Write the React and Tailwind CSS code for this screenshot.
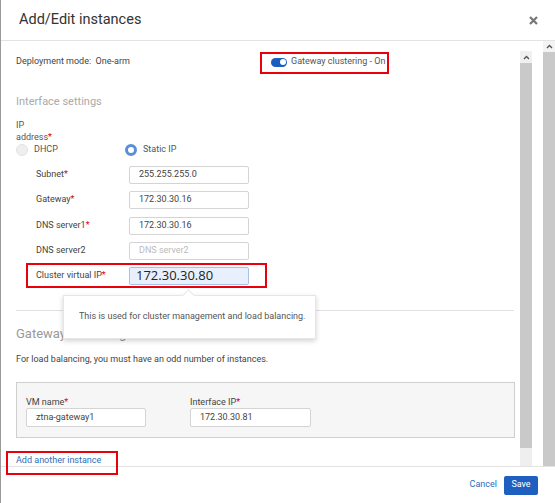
import React from 'react';

const Req = () => <span className="text-[#d0021b]">*</span>;

const Field = ({ label, required, value, placeholder, highlight }) => (
  <div className="flex items-center h-[18px]">
    <div className="w-[93px] text-[9px] text-[#444]">
      {label}
      {required && <Req />}
    </div>
    {highlight ? (
      <div className="w-[120px] h-[18px] flex items-center pl-[6px] bg-[#e8f0fe] border border-[#a9c1e3] rounded-[2px] text-[13px] text-[#222] font-['Open_Sans',sans-serif]">
        {value}
      </div>
    ) : (
      <div
        className={
          'w-[120px] h-[18px] flex items-center pl-[9px] bg-white border border-[#d4d4d4] rounded-[2px] text-[9px] ' +
          (value ? 'text-[#444]' : 'text-[#bbb]')
        }
      >
        {value || placeholder}
      </div>
    )}
  </div>
);

const Caret = () => (
  <svg width="7" height="5" viewBox="0 0 7 5">
    <path d="M1 4 L3.5 1.5 L6 4" fill="none" stroke="#555" strokeWidth="1.4" />
  </svg>
);

export default function App() {
  return (
    <div className="relative w-[555px] h-[503px] bg-white border-l border-[#9a9a9a] flex flex-col overflow-hidden font-['Roboto',sans-serif]">
      {/* header */}
      <div className="h-[41px] shrink-0 border-b border-[#e3e3e3] flex items-center justify-between pl-[18px] pr-[17px]">
        <div className="text-[14.5px] text-[#333]">Add/Edit instances</div>
        <svg width="9" height="9" viewBox="0 0 9 9">
          <path d="M1 1 L8 8 M8 1 L1 8" stroke="#777" strokeWidth="2.2" />
        </svg>
      </div>

      {/* body */}
      <div className="h-[425px] shrink-0 flex">
        <div className="w-[514px] shrink-0 pl-[15px] overflow-hidden">
          <div className="flex items-center h-[22px] mt-[10px] text-[9px] text-[#444]">
            <div className="w-[255px]">Deployment mode:&nbsp; One-arm</div>
            <div className="w-[16px] h-[9px] rounded-full bg-[#1a5fc0] flex items-center justify-end pr-[1.5px]">
              <div className="w-[6px] h-[6px] rounded-full bg-white" />
            </div>
            <div className="ml-[4px] text-[9px] text-[#555]">Gateway clustering - On</div>
          </div>

          <div className="mt-[22px] text-[11px] leading-[14px] text-[#aaa]">Interface settings</div>

          <div className="mt-[10px] text-[9px] leading-[12px] text-[#555]">IP</div>
          <div className="text-[9px] leading-[12px] text-[#555]">
            address<Req />
          </div>

          <div className="flex items-center h-[13px] text-[9px] text-[#555]">
            <div className="flex items-center w-[109px]">
              <div className="w-[12px] h-[12px] rounded-full bg-[#efefef] border border-[#e2e2e2]" />
              <span className="ml-[6px]">DHCP</span>
            </div>
            <div className="flex items-center">
              <div className="w-[12px] h-[12px] rounded-full bg-white border-[3px] border-[#5a8fd8]" />
              <span className="ml-[6px]">Static IP</span>
            </div>
          </div>

          <div className="pl-[20px] mt-[10px] flex flex-col">
            <Field label="Subnet" required value="255.255.255.0" />
            <div className="mt-[7px]">
              <Field label="Gateway" required value="172.30.30.16" />
            </div>
            <div className="mt-[8px]">
              <Field label="DNS server1" required value="172.30.30.16" />
            </div>
            <div className="mt-[7px]">
              <Field label="DNS server2" placeholder="DNS server2" />
            </div>
            <div className="mt-[7px]">
              <Field label="Cluster virtual IP" required value="172.30.30.80" highlight />
            </div>
          </div>

          <div className="mt-[25px] h-px w-[498px] bg-[#e0e0e0]" />

          <div className="mt-[15px] text-[13px] leading-[16px] text-[#999]">Gateway clustering</div>
          <div className="mt-[11px] text-[9px] leading-[12px] text-[#444]">
            For load balancing, you must have an odd number of instances.
          </div>

          <div className="mt-[17px] w-[499px] h-[56px] bg-[#f6f6f6] border border-[#cfcfcf] pl-[9px] pt-[13px] flex gap-[44px]">
            <div className="flex flex-col">
              <div className="text-[9px] leading-[12px] text-[#444]">
                VM name<Req />
              </div>
              <div className="w-[120px] h-[19px] flex items-center pl-[9px] bg-white border border-[#d4d4d4] rounded-[2px] text-[9px] text-[#444]">
                ztna-gateway1
              </div>
            </div>
            <div className="flex flex-col">
              <div className="text-[9px] leading-[12px] text-[#444]">
                Interface IP<Req />
              </div>
              <div className="w-[121px] h-[19px] flex items-center pl-[9px] bg-white border border-[#d4d4d4] rounded-[2px] text-[9px] text-[#444]">
                172.30.30.81
              </div>
            </div>
          </div>

          <div className="mt-[17px] text-[9px] leading-[11px] text-[#2a6ebd]">Add another instance</div>
        </div>

        {/* inner scrollbar */}
        <div className="ml-[5px] mt-[10px] w-[12px] flex flex-col">
          <div className="h-[12px] bg-[#f0f0f0] flex items-center justify-center">
            <Caret />
          </div>
          <div className="h-[385px] bg-[#c9c9c9]" />
          <div className="flex-1 bg-[#efefef]" />
        </div>

        {/* outer scrollbar */}
        <div className="ml-[11px] w-[12px] flex flex-col">
          <div className="h-[11px] bg-[#f3f3f3] flex items-center justify-center">
            <Caret />
          </div>
          <div className="flex-1 bg-[#c9c9c9]" />
        </div>
      </div>

      {/* footer */}
      <div className="flex-1 border-t border-[#e3e3e3] flex items-center justify-end pr-[17px] gap-[7px]">
        <span className="text-[9px] text-[#2a6ebd]">Cancel</span>
        <div className="w-[34px] h-[19px] rounded-[2px] bg-[#1f5fbf] text-white text-[9px] flex items-center justify-center">
          Save
        </div>
      </div>

      {/* tooltip */}
      <div className="absolute left-[62px] top-[295px] w-[253px] h-[44px] bg-white border border-[#e6e6e6] shadow-[0_2px_5px_rgba(0,0,0,0.18)] flex items-center pl-[15px] text-[9px] text-[#555]">
        This is used for cluster management and load balancing.
        <div className="absolute left-[120px] top-[-5px] w-[9px] h-[9px] bg-white border-l border-t border-[#e6e6e6] rotate-45" />
      </div>

      {/* annotation boxes */}
      <div className="absolute left-[259px] top-[52px] w-[129px] h-[22px] border-2 border-[#e8000b]" />
      <div className="absolute left-[25px] top-[263px] w-[241px] h-[25px] border-2 border-[#e8000b]" />
      <div className="absolute left-[5px] top-[451px] w-[112px] h-[24px] border-2 border-[#e8000b]" />
    </div>
  );
}
